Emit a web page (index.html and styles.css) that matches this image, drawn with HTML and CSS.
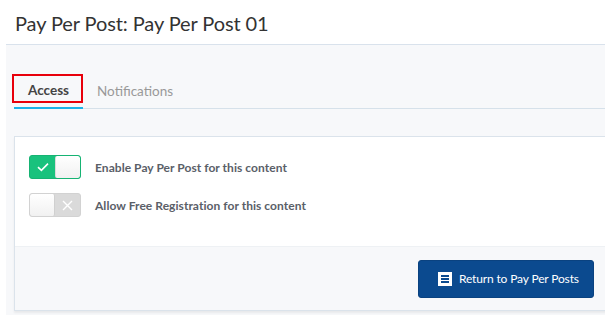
FILE: index.html
```html
<!DOCTYPE html>
<html>
<head>
<meta charset="utf-8">
<link rel="stylesheet" href="styles.css">
</head>
<body>
<div class="page">
  <header class="header">
    <h1 class="title">Pay Per Post: Pay Per Post 01</h1>
  </header>
  <section class="panel">
    <nav class="tabs">
      <div class="tab tab-active">Access</div>
      <div class="tab">Notifications</div>
    </nav>
    <div class="card">
      <div class="card-body">
        <div class="row">
          <span class="toggle toggle-on">
            <svg class="toggle-icon icon-check" width="12" height="10" viewBox="0 0 12 10"><path d="M1 5.2 L4.4 8.4 L11 1.6" fill="none" stroke="#fff" stroke-width="1.6"/></svg>
            <span class="knob"></span>
          </span>
          <span class="label">Enable Pay Per Post for this content</span>
        </div>
        <div class="row">
          <span class="toggle toggle-off">
            <span class="knob"></span>
            <svg class="toggle-icon icon-x" width="11" height="11" viewBox="0 0 11 11"><path d="M1 1 L10 10 M10 1 L1 10" fill="none" stroke="#fff" stroke-width="1.4"/></svg>
          </span>
          <span class="label">Allow Free Registration for this content</span>
        </div>
      </div>
      <div class="card-footer">
        <button class="btn">
          <svg class="btn-icon" width="14" height="14" viewBox="0 0 14 14"><rect x="0" y="0" width="14" height="14" fill="#fff"/><rect x="3" y="3" width="8" height="2" fill="#0b4a8f"/><rect x="3" y="6" width="8" height="2" fill="#0b4a8f"/><rect x="3" y="9" width="8" height="2" fill="#0b4a8f"/></svg>
          <span>Return to Pay Per Posts</span>
        </button>
      </div>
    </div>
  </section>
</div>
</body>
</html>
```
FILE: styles.css
```css
html, body {
  margin: 0;
  padding: 0;
  background: #fff;
  overflow: hidden;
}
body {
  font-family: "Lato", "Open Sans", sans-serif;
  width: 605px;
  height: 315px;
}
.page {
  width: 605px;
}
.header {
  height: 44px;
  padding: 0 15px;
  display: flex;
  align-items: center;
}
.title {
  margin: 0;
  font-size: 20px;
  font-weight: 400;
  color: #333;
  line-height: 1;
  padding-top: 1px;
  letter-spacing: -0.1px;
}
.panel {
  margin-left: 6px;
  border-top: 1px solid #d9e2ec;
  background: #f7f8fa;
  padding: 28px 0 6px 8px;
  width: 600px;
}
.tabs {
  display: flex;
  border-bottom: 1px solid #d6e1ea;
  height: 35px;
  align-items: stretch;
}
.tab {
  position: relative;
  font-size: 13.5px;
  color: #999;
  padding: 0 14px;
  display: flex;
  align-items: center;
  margin-bottom: -1px;
}
.tab-active {
  color: #444;
  font-weight: 700;
  width: 41px;
  justify-content: center;
  border-bottom: 2px solid #1ab3ea;
}
.tab-active::before {
  content: "";
  position: absolute;
  left: -2px;
  top: 1px;
  width: 67px;
  height: 25px;
  border: 2px solid #e8000b;
}
.card {
  margin-top: 27px;
  background: #fff;
  border: 1px solid #dbe3eb;
  border-right: none;
  width: 593px;
  box-shadow: 0 2px 2px rgba(0,0,0,0.06);
}
.card-body {
  padding: 18px 0 29px 14px;
  display: flex;
  flex-direction: column;
  gap: 14px;
}
.row {
  display: flex;
  align-items: center;
  gap: 14px;
}
.toggle {
  position: relative;
  width: 52px;
  height: 24px;
  box-sizing: border-box;
  border-radius: 3px;
  display: flex;
  align-items: center;
  overflow: hidden;
}
.toggle-on {
  background: #19c27d;
  border: 1px solid #16b373;
  justify-content: space-between;
  padding-left: 7px;
}
.toggle-off {
  background: #dadada;
  border: 1px solid #d2d2d2;
  justify-content: space-between;
  padding-right: 7px;
}
.knob {
  width: 25px;
  height: 22px;
  box-sizing: border-box;
  background: linear-gradient(#ffffff, #f1f1f1);
  border-radius: 2px;
}
.toggle-on .knob {
  border-left: 1px solid #dcdcdc;
}
.toggle-off .knob {
  border-right: 1px solid #d0d0d0;
}
.label {
  font-size: 12px;
  font-weight: 700;
  color: #5a6068;
  letter-spacing: 0.05px;
}
.card-footer {
  background: #f7f8fa;
  border-top: 1px solid #eef1f4;
  height: 63px;
  display: flex;
  align-items: center;
  justify-content: flex-end;
  padding-right: 14px;
}
.btn {
  box-sizing: border-box;
  background: #0b4a8f;
  border: 1px solid #0a4280;
  border-radius: 3px;
  color: #fff;
  font-family: inherit;
  font-size: 12px;
  letter-spacing: -0.15px;
  height: 38px;
  width: 176px;
  display: flex;
  align-items: center;
  gap: 7px;
  padding: 0 0 0 19px;
}
.btn-icon {
  flex: none;
}
```
